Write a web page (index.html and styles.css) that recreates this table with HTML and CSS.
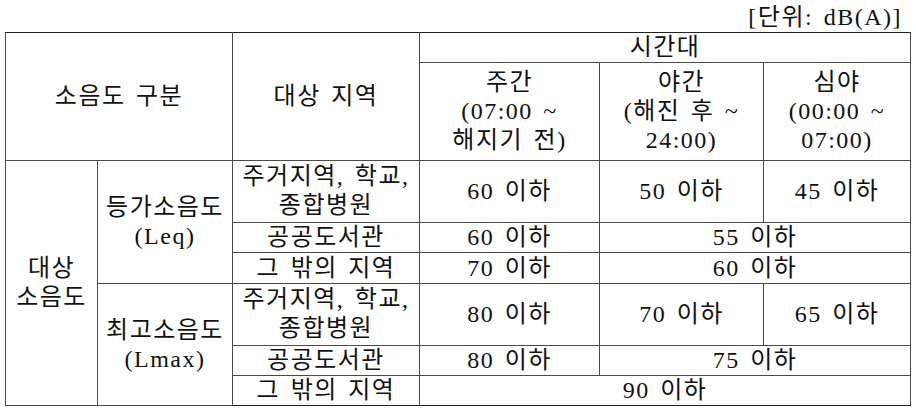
FILE: index.html
```html
<!DOCTYPE html>
<html lang="ko">
<head>
<meta charset="utf-8">
<title>소음도 기준</title>
<link rel="stylesheet" href="styles.css">
</head>
<body>
<div class="unit">[단위: dB(A)]</div>
<table class="noise">
  <colgroup>
    <col class="c1"><col class="c2"><col class="c3"><col class="c4"><col class="c5"><col class="c6">
  </colgroup>
  <tr class="r-top">
    <td rowspan="2" colspan="2">소음도 구분</td>
    <td rowspan="2">대상 지역</td>
    <td colspan="3">시간대</td>
  </tr>
  <tr class="r-sub">
    <td>주간<br>(07:00 ~<br>해지기 전)</td>
    <td>야간<br>(해진 후 ~<br>24:00)</td>
    <td>심야<br>(00:00 ~<br>07:00)</td>
  </tr>
  <tr>
    <td rowspan="6">대상<br>소음도</td>
    <td rowspan="3">등가소음도<br>(Leq)</td>
    <td class="two">주거지역, 학교,<br>종합병원</td>
    <td>60 이하</td>
    <td>50 이하</td>
    <td>45 이하</td>
  </tr>
  <tr>
    <td>공공도서관</td>
    <td>60 이하</td>
    <td colspan="2">55 이하</td>
  </tr>
  <tr>
    <td class="one">그 밖의 지역</td>
    <td>70 이하</td>
    <td colspan="2">60 이하</td>
  </tr>
  <tr>
    <td rowspan="3">최고소음도<br>(Lmax)</td>
    <td class="two">주거지역, 학교,<br>종합병원</td>
    <td>80 이하</td>
    <td>70 이하</td>
    <td>65 이하</td>
  </tr>
  <tr>
    <td>공공도서관</td>
    <td>80 이하</td>
    <td colspan="2">75 이하</td>
  </tr>
  <tr>
    <td>그 밖의 지역</td>
    <td colspan="3">90 이하</td>
  </tr>
</table>
</body>
</html>
```
FILE: styles.css
```css
html, body {
  margin: 0;
  padding: 0;
  background: #ffffff;
}
body {
  padding: 2px 0 0 5px;
  font-family: "Liberation Serif", "Noto Sans CJK KR", serif;
  font-size: 24px;
  font-weight: 400;
  letter-spacing: 1.5px;
  word-spacing: 3px;
  color: #111111;
}
.unit {
  width: 905px;
  box-sizing: border-box;
  text-align: right;
  line-height: 30px;
  height: 30px;
  padding-right: 8px;
}
.noise {
  border-collapse: collapse;
  table-layout: fixed;
  width: 905px;
}
.c1 { width: 92px; }
.c2 { width: 135px; }
.c3 { width: 187px; }
.c4 { width: 180px; }
.c5 { width: 164px; }
.c6 { width: 147px; }
.noise td {
  border: 1px solid #4a4a4a;
  padding: 0;
  text-align: center;
  vertical-align: middle;
  line-height: 29px;
  white-space: nowrap;
}
.noise .r-top td {
  border-top-color: #222222;
}
.noise .r-sub td {
  padding: 5px 0;
}
.noise td.two {
  padding: 1px 0 2px;
}
.noise td.one {
  padding: 1px 0 0;
}
.noise tr:last-child td {
  border-bottom-color: #222222;
}
```
